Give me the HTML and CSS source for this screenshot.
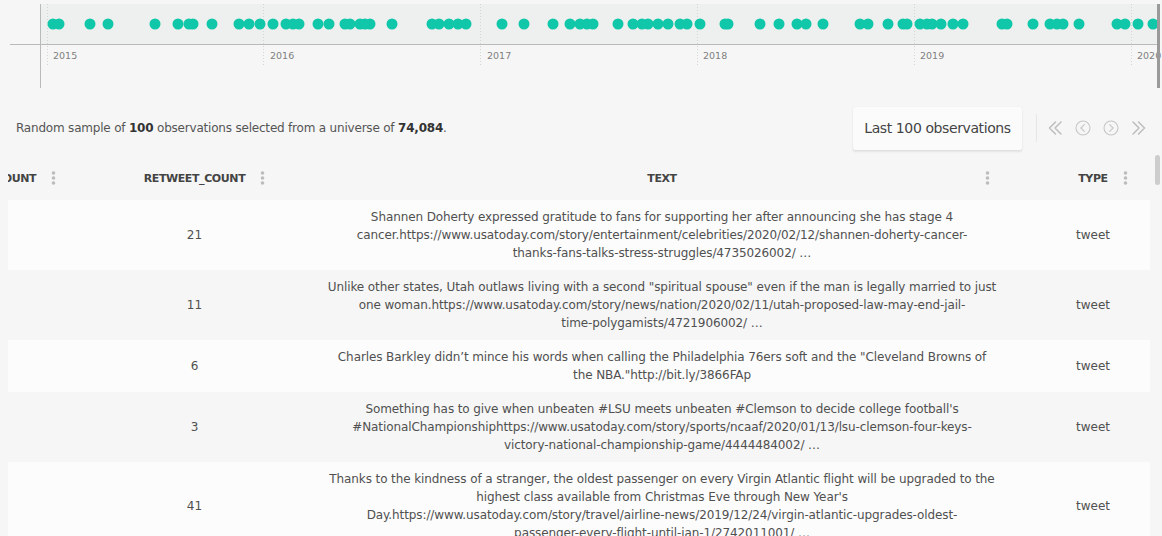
FILE: index.html
```html
<!DOCTYPE html>
<html lang="en">
<head>
<meta charset="utf-8">
<title>Observations</title>
<link rel="stylesheet" href="styles.css">
</head>
<body>
<svg class="chart" width="1162" height="96" viewBox="0 0 1162 96">
  <rect x="40" y="4" width="1120" height="40" fill="#eef0ef"/>
  <g stroke="#d4d6d6" stroke-width="1" stroke-dasharray="1 2">
    <line x1="47.5" y1="4" x2="47.5" y2="66"/>
    <line x1="263.5" y1="4" x2="263.5" y2="66"/>
    <line x1="480.5" y1="4" x2="480.5" y2="66"/>
    <line x1="697.5" y1="4" x2="697.5" y2="66"/>
    <line x1="914.5" y1="4" x2="914.5" y2="66"/>
    <line x1="1131.5" y1="4" x2="1131.5" y2="66"/>
  </g>
  <line x1="10" y1="44.5" x2="1160" y2="44.5" stroke="#b9bbbb" stroke-width="1"/>
  <line x1="40.5" y1="4" x2="40.5" y2="88" stroke="#b9bbbb" stroke-width="1"/>
  <g class="years">
    <text x="53" y="59">2015</text>
    <text x="270" y="59">2016</text>
    <text x="487" y="59">2017</text>
    <text x="703" y="59">2018</text>
    <text x="920" y="59">2019</text>
    <text x="1137" y="59">2020</text>
  </g>
  <g fill="#11c7a9" id="dots"></g>
  <rect x="1157" y="4" width="3" height="84" fill="#9a9a9a"/>
</svg>

<div class="toolbar">
  <p class="summary">Random sample of <b>100</b> observations selected from a universe of <b>74,084</b>.</p>
  <button class="range-btn" type="button">Last 100 observations</button>
  <span class="divider"></span>
  <nav class="pager">
    <svg class="pg" width="16" height="16" viewBox="0 0 16 16"><path d="M8.5 2 2.5 8l6 6M14 2 8 8l6 6"/></svg>
    <svg class="pg thin" width="16" height="16" viewBox="0 0 16 16"><circle cx="8" cy="8" r="7"/><path d="M9.3 4.6 5.9 8l3.4 3.4"/></svg>
    <svg class="pg thin" width="16" height="16" viewBox="0 0 16 16"><circle cx="8" cy="8" r="7"/><path d="M6.7 4.6 10.1 8l-3.4 3.4"/></svg>
    <svg class="pg" width="16" height="16" viewBox="0 0 16 16"><path d="M2 2l6 6-6 6M7.5 2l6 6-6 6"/></svg>
  </nav>
</div>

<div class="table-area">
  <div class="table-wrap">
    <div class="thead">
      <div class="th"><span class="lbl">FAVORITE_COUNT</span><svg class="kebab" width="5" height="14" viewBox="0 0 5 14"><circle cx="2.5" cy="2" r="1.8"/><circle cx="2.5" cy="7" r="1.8"/><circle cx="2.5" cy="12" r="1.8"/></svg></div>
      <div class="th"><span class="lbl">RETWEET_COUNT</span><svg class="kebab" width="5" height="14" viewBox="0 0 5 14"><circle cx="2.5" cy="2" r="1.8"/><circle cx="2.5" cy="7" r="1.8"/><circle cx="2.5" cy="12" r="1.8"/></svg></div>
      <div class="th th-end"><span class="lbl">TEXT</span><svg class="kebab" width="5" height="14" viewBox="0 0 5 14"><circle cx="2.5" cy="2" r="1.8"/><circle cx="2.5" cy="7" r="1.8"/><circle cx="2.5" cy="12" r="1.8"/></svg></div>
      <div class="th"><span class="lbl">TYPE</span><svg class="kebab" width="5" height="14" viewBox="0 0 5 14"><circle cx="2.5" cy="2" r="1.8"/><circle cx="2.5" cy="7" r="1.8"/><circle cx="2.5" cy="12" r="1.8"/></svg></div>
    </div>
    <div class="row odd">
      <div class="td"></div>
      <div class="td num">21</div>
      <div class="td txt">Shannen Doherty expressed gratitude to fans for supporting her after announcing she has stage 4<br>cancer.https://www.usatoday.com/story/entertainment/celebrities/2020/02/12/shannen-doherty-cancer-<br>thanks-fans-talks-stress-struggles/4735026002/ …</div>
      <div class="td">tweet</div>
    </div>
    <div class="row">
      <div class="td"></div>
      <div class="td num">11</div>
      <div class="td txt">Unlike other states, Utah outlaws living with a second "spiritual spouse" even if the man is legally married to just<br>one woman.https://www.usatoday.com/story/news/nation/2020/02/11/utah-proposed-law-may-end-jail-<br>time-polygamists/4721906002/ …</div>
      <div class="td">tweet</div>
    </div>
    <div class="row odd">
      <div class="td"></div>
      <div class="td num">6</div>
      <div class="td txt">Charles Barkley didn’t mince his words when calling the Philadelphia 76ers soft and the "Cleveland Browns of<br>the NBA."http://bit.ly/3866FAp</div>
      <div class="td">tweet</div>
    </div>
    <div class="row">
      <div class="td"></div>
      <div class="td num">3</div>
      <div class="td txt">Something has to give when unbeaten #LSU meets unbeaten #Clemson to decide college football's<br>#NationalChampionshiphttps://www.usatoday.com/story/sports/ncaaf/2020/01/13/lsu-clemson-four-keys-<br>victory-national-championship-game/4444484002/ …</div>
      <div class="td">tweet</div>
    </div>
    <div class="row odd">
      <div class="td"></div>
      <div class="td num">41</div>
      <div class="td txt">Thanks to the kindness of a stranger, the oldest passenger on every Virgin Atlantic flight will be upgraded to the<br>highest class available from Christmas Eve through New Year's<br>Day.https://www.usatoday.com/story/travel/airline-news/2019/12/24/virgin-atlantic-upgrades-oldest-<br>passenger-every-flight-until-jan-1/2742011001/ …</div>
      <div class="td">tweet</div>
    </div>
  </div>
  <span class="vthumb"></span>
</div>
<script src="app.js"></script>
</body>
</html>
```

FILE: styles.css
```css
* { box-sizing: border-box; }

body {
  margin: 0;
  background: #f6f6f6;
  font-family: "DejaVu Sans", "Open Sans", sans-serif;
  color: #555;
  overflow: hidden;
}

.chart { display: block; }

.years text {
  font-family: "DejaVu Sans", sans-serif;
  font-size: 9.5px;
  fill: #808080;
}

.toolbar {
  display: flex;
  align-items: center;
  height: 64px;
  padding: 0 15px 0 16px;
}

.summary {
  flex: 1;
  margin: 0;
  font-size: 12px;
  letter-spacing: -0.2px;
  color: #555;
}

.summary b { font-weight: 600; color: #333; }

.range-btn {
  width: 169px;
  height: 43px;
  border: none;
  border-radius: 2px;
  background: #fbfbfb;
  box-shadow: 0 2px 2px rgba(0, 0, 0, 0.08), 0 0 1px rgba(0, 0, 0, 0.12);
  font-family: inherit;
  font-size: 14px;
  letter-spacing: -0.4px;
  color: #444;
  padding: 0;
}

.divider {
  width: 1px;
  height: 28px;
  margin: 0 10px 0 14px;
  background: #e6e6e6;
}

.pager {
  display: flex;
  gap: 12px;
  align-items: center;
}

.pg {
  display: block;
  fill: none;
  stroke: #bdbdbd;
  stroke-width: 1.5;
  stroke-linecap: round;
  stroke-linejoin: round;
}

.pg.thin { stroke-width: 1.1; stroke: #c6c6c6; }

.table-area { position: relative; }

.table-wrap {
  margin: 0 12px 0 8px;
  overflow: hidden;
}

.thead,
.row {
  display: grid;
  grid-template-columns: 156px 263px 672px 190px;
  width: 1281px;
}

.thead {
  height: 36px;
  margin-bottom: 4px;
  align-items: center;
}

.th {
  display: grid;
  grid-template-columns: 1fr auto 1fr;
  align-items: center;
  overflow: hidden;
  font-size: 11px;
  font-weight: 600;
  color: #444;
  letter-spacing: -0.4px;
}

.th .lbl { grid-column: 2; white-space: nowrap; }

.kebab {
  grid-column: 3;
  justify-self: start;
  margin-left: 15px;
  fill: #bcbcbc;
}

.th-end .kebab {
  justify-self: end;
  margin-right: 8px;
}

.row {
  padding: 8px 0;
  align-items: center;
  font-size: 12px;
  line-height: 18px;
  color: #505050;
}

.row.odd { background: #fcfcfc; }

.td { text-align: center; }

.txt { letter-spacing: -0.1px; }

.vthumb {
  position: absolute;
  top: -5px;
  right: 2px;
  width: 5px;
  height: 30px;
  border-radius: 3px;
  background: #cdcdcd;
}
```

FILE: app.js
```js
(function () {
  var xs = [53,59,90,108,155,178,189,193,212,239,249,260,273,286,293,299,318,329,345,350,360,365,370,392,432,439,449,458,466,502,524,553,570,580,587,593,618,633,642,648,658,668,680,687,700,725,728,760,779,797,806,823,860,868,888,903,907,920,927,932,941,953,963,1002,1007,1033,1050,1057,1063,1079,1117,1125,1138,1153];
  var g = document.getElementById('dots');
  var ns = 'http://www.w3.org/2000/svg';
  xs.forEach(function (x) {
    var c = document.createElementNS(ns, 'circle');
    c.setAttribute('cx', x);
    c.setAttribute('cy', 24);
    c.setAttribute('r', 5.5);
    g.appendChild(c);
  });
  document.querySelector('.table-wrap').scrollLeft = 101;
})();
```
